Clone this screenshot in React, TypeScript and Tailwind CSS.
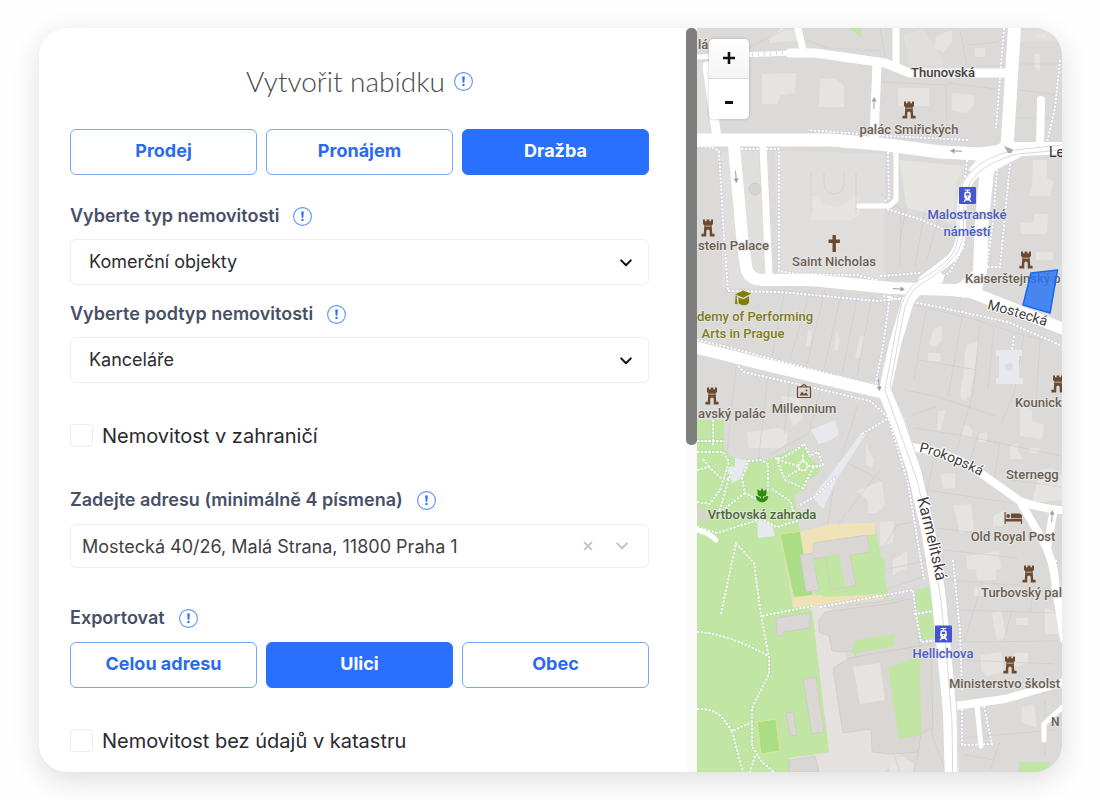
import { useState } from "react";
import type { ReactNode } from "react";

const FORM_FONT = "font-['Inter','Liberation_Sans',sans-serif]";

function InfoButton({ label }: { label: string }) {
  return (
    <button type="button" aria-label={label} className="size-[19px] shrink-0">
      <svg viewBox="0 0 19 19" className="block size-full" aria-hidden="true">
        <circle cx="9.5" cy="9.5" r="8.9" fill="#fff" stroke="#5b92fb" strokeWidth="1.1" />
        <path d="M8.2 4.6h2.6l-.5 6.2H8.7z" fill="#2b6ff5" />
        <circle cx="9.5" cy="12.9" r="1.2" fill="#2b6ff5" />
      </svg>
    </button>
  );
}

function FieldHeading({ children, htmlFor, info }: { children: ReactNode; htmlFor?: string; info: string }) {
  const text = "text-[18px] leading-7 font-semibold text-[#475066]";
  return (
    <div className="flex h-7 items-center gap-[14px]">
      {htmlFor ? (
        <label htmlFor={htmlFor} className={text}>{children}</label>
      ) : (
        <span className={text}>{children}</span>
      )}
      <InfoButton label={info} />
    </div>
  );
}

function Chevron({ className }: { className: string }) {
  return (
    <svg viewBox="0 0 12 8" className={className} fill="none" stroke="currentColor" strokeWidth="2" strokeLinecap="round" strokeLinejoin="round" aria-hidden="true">
      <path d="M1.2 1.4 6 6.2l4.8-4.8" />
    </svg>
  );
}

function Choices({ options, initial, label }: { options: string[]; initial: string; label: string }) {
  const [active, setActive] = useState(initial);
  return (
    <div role="group" aria-label={label} className="grid grid-cols-3 gap-[9px]">
      {options.map((o) => (
        <button
          key={o}
          type="button"
          aria-pressed={o === active}
          onClick={() => setActive(o)}
          className={
            o === active
              ? "h-[46px] rounded-[6px] border border-[#2970ff] bg-[#2970ff] pb-[3px] text-[18px] font-bold text-white"
              : "h-[46px] rounded-[6px] border border-[#7ba5f8] bg-white pb-[3px] text-[18px] font-bold text-[#2b6bea]"
          }
        >
          {o}
        </button>
      ))}
    </div>
  );
}

function SelectBox({ id, options }: { id: string; options: string[] }) {
  return (
    <div className="relative">
      <select id={id} className="h-[46px] w-full appearance-none rounded-[6px] border border-[#eeeef2] bg-white pr-12 pb-[2px] pl-[18px] text-[18px] text-[#2c2c30]">
        {options.map((o) => (
          <option key={o}>{o}</option>
        ))}
      </select>
      <Chevron className="pointer-events-none absolute top-[20px] right-[17px] h-2 w-3 text-[#111]" />
    </div>
  );
}

function CheckRow({ children }: { children: ReactNode }) {
  return (
    <label className="flex h-[23px] items-center gap-[9px] text-[20px] text-[#2a2a2e]">
      <input type="checkbox" className="size-[23px] appearance-none rounded-[4px] border border-[#ececf0] bg-white checked:bg-[#2970ff]" />
      {children}
    </label>
  );
}

function Road({ d, w }: { d: string; w: number }) {
  return <path d={d} fill="none" stroke="#fff" strokeWidth={w} strokeLinecap="round" strokeLinejoin="round" />;
}

function Footpath({ d, tone = "#c5c8dc" }: { d: string; tone?: string }) {
  return (
    <g fill="none" strokeLinejoin="round">
      <path d={d} stroke={tone} strokeWidth="2.8" strokeOpacity="0.6" />
      <path d={d} stroke="#fff" strokeWidth="1.9" strokeDasharray="2.4 1.4" />
    </g>
  );
}

function Castle({ x, y }: { x: number; y: number }) {
  return (
    <path
      transform={`translate(${x - 7} ${y - 9})`}
      d="M2 .5h2v1.8h1.6V.5h2.8v1.8H10V.5h2v4.6l-1.4 1.2.7 8.4H13.600v2.800H8.700v-5.200a1.700 1.700 0 0 0-3.400 0v5.200H.4v-2.800h2.300l.7-8.400L2 5.100zM4.300 6.800v.8h5.400v-.8z"
      fill="#6b4a32"
      fillRule="evenodd"
      stroke="#e6e3df"
      strokeWidth="0.5"
      paintOrder="stroke"
    />
  );
}

function Tram({ x, y }: { x: number; y: number }) {
  return (
    <g transform={`translate(${x} ${y})`}>
      <rect width="17" height="17" rx="1" fill="#4356cf" />
      <path d="M5.800 2.400h5.400v1.100H9.200l-.3 1.200h1.200c.8 0 1.300.5 1.400 1.200l.4 3.600c0 1-.6 1.800-1.300 1.900l2 3.400H11l-.8-1.200H6.800l-.8 1.200H4.400l2-3.400c-.7-.1-1.300-.9-1.300-1.900l.4-3.600c.1-.7.6-1.200 1.400-1.200h1.200l-.3-1.200h-2z" fill="#fff" />
      <path d="M7 6.200h3l.3 2.200H6.700z" fill="#4356cf" />
      <circle cx="8.500" cy="9.900" r="0.700" fill="#4356cf" />
    </g>
  );
}

function Arrow({ x, y, r }: { x: number; y: number; r: number }) {
  return (
    <g transform={`translate(${x} ${y}) rotate(${r})`} stroke="#9a9dae" fill="#9a9dae" strokeWidth="1">
      <path d="M-6 0H4" />
      <path d="M1.500 -2.500 6 0 1.500 2.500z" stroke="none" />
    </g>
  );
}

type LabelProps = { x: number; y: number; children: string; fill?: string; anchor?: "start" | "middle" };

function Label({ x, y, children, fill = "#6b5f55", anchor = "middle" }: LabelProps) {
  return (
    <text x={x} y={y} textAnchor={anchor} fill={fill} stroke="#e9e7e4" strokeWidth="2" strokeOpacity="0.8" strokeLinejoin="round" paintOrder="stroke">
      {children}
    </text>
  );
}

function MapDrawing() {
  return (
    <svg viewBox="697 28 365 744" preserveAspectRatio="xMinYMin slice" className="block h-full w-full font-['Roboto','Liberation_Sans',sans-serif] text-[13px] font-medium" role="img" aria-label="Mapa okolí Mostecké ulice">
      <rect x="697" y="28" width="365" height="744" fill="#dcdad8" />

      {/* squares and courtyards */}
      <g fill="#e5e4e1">
        <path d="M697 62h12l6 76h-18zM740 148h18l9 126h-14l-6-25zM722 152h12l10 110 14 26h-36zM900 162l65 5-8 60-20-8-20-18zM775 150l110 4v140l-108-20zM903 36l20-8 22 36-34 4zM1018 30h44v12h-42z" opacity="0.5" />
        <path d="M899 160l66 6-10 18-2 40-22-10-24-6z" />
        <path d="M762 74l34-1-1 20-15 2-2 9h-16zM820 79l14-1 10 8v21h-25zM768 38l14-10 18 4 2 8-32 3zM811 196h8c5 14 27 14 34 0h4v-2l3 20-8 6h-41zM898 88h31v18h-31zM952 93l22 2v10l-8 8-14-2zM936 36l16-6v12l-8 10-9-3zM975 48h10v9h-10zM1034 54h6v18l-5-4zM1036 34h10v4h-10zM1033 160h14v18l7 4-4 14h-22l4-10z" />
        <path d="M1020 222l14 1v-9h14l-1 20h-26zM1036 252h17v8h-17zM934 328l8-2v14l-7 7-6-2zM928 353h12l1 8h-13zM966 345l12-4-4 36-8 24-5-3zM808 330l4 2-2 14h-4zM836 330l4 10-2 10h-4zM860 336h5l-5 22h-5zM762 440l18-12 8 5-2 10h-20zM747 432l32-4 8 14-6 6h-32zM781 396l18 2 4 20-10 8zM866 382h14l-2 12-10 2z" />
        <path d="M938 411l8-1-5 20h-4zM962 382l10-2-2 17-10-2zM962 427l6-3 5 7-2 6h-9zM979 434l8-2v10h-9zM1020 406l12 3v12l12 4-2 14-22-3zM1010 446l8-3v8l6 8h-14zM1029 448h11l-1 5h-9zM1040 470l12-2 10 8v24l-30 3zM941 474l14-1v15l-12 1zM953 505l18-1 3 26-14 3zM967 556l32-5 2 18-5 1v10h-19l-1-10-9-1zM993 516l12-6 2 12-6 4h-8zM857 491l25-10 3 24-8 8-9 0 0-12zM866 444l8 16-2 8-6-4zM880 522l14-1-1 22-13 3zM893 560l14-9v17l-14 7z" />
        <path d="M981 655l20-3 3 20-17 4-6-6zM1013 653h15v10l-12 4zM1016 618h12v7h-12zM992 613l9-3 6 28-10 3zM1022 707l12-2 3 23-16-6zM880 668l6 28-6 10zM974 588l16-2v10h-16zM1045 608l16 6v20h-16zM888 760l14-4 12 8-2 8h-22z" />
      </g>
      <path d="M810 605l22 4 18 60-10 12 4 52 28-5 1 24 32-4-20 24h-96l-2-14 41-5z" fill="#e5e1de" />

      {/* parcel boundaries */}
      <g fill="none" stroke="#c9c6c3" strokeWidth="0.800" opacity="0.600">
        <path d="M806 40l22 8 52 3M748 48l40-20M811 172v42M856 172v42M824 172v10c0 16 20 16 20 0v-10M881 82l65 3 1 57M946 83l52 6M880 28l7 38M960 30l7 36h38M968 45l30-3M1018 64h44M1016 118h40M1020 90l38 5M881 194l20 15-1 60M925 209l-10 58M906 208l-6 34M940 214l-14 48M786 285l-14 71M810 290l-20 70M825 290l-18 74M842 292l-18 76M858 294l-16 80M872 296l-15 80M962 318l-14 79M926 310l-12 70M914 305l60 14 42 14 46 12M980 325l-7 68-20 70M1024 334l-10 60-12 28M994 328l-6 62M1040 341l-4 60M918 360l60 10M905 390l30 6 60 20M912 415l24-8M736 367l-9 86M768 376l-10 87M790 382l-6 52M820 391l-11 42-39 22M858 404l-23 74-8 50M842 460l39 20M880 470l-42 54M915 428l50 8 97 20M934 458l-14 70M978 435l-12 38M1000 442l-7 44M1012 480l50 7M920 489l92 14M934 528l90 10M944 550l74 8M950 580l100 8M955 610l104 3M960 642l98-1M980 590l-15 50M1012 610l-8 30M1034 588l-4 24M962 660l92 4M960 680l50 5M962 738l93-8M1000 742l-10 28M1045 700v56M965 755l30 5" />
        <path d="M845 606l20-2 40-6M855 665l-12 64M880 655l18-9M932 655v80l14 37M888 738l12 34M920 745l-6 27M885 545l12-20 22-4M885 570l42-10M885 590l40-14M886 614v24" />
      </g>

      {/* parks and gardens */}
      <g fill="#c1e5a3">
        <path d="M697 420H724V448L730 456 742 460 762 462 780 455 790 450 803 446 812 460 820 466 818 474 808 480 804 490 794 495 798 520 800 532 780 534 793 607 812 610 829 752 789 758V772H697z" />
        <path d="M806 530l69-4 14 72-72 6zM914 590l15-3 4 24-17 4zM916 616l16-3 3 24-15 4zM849 28h12v10zM1019 762h32l-6 10h-26zM880 560l4-3 2 14-6 2z" />
      </g>
      <path d="M697 508l10 2 2 12-12-2zM736 458l-4 8" fill="#d3d6c9" />
      <path d="M780 534l24-3 9 64-19 4z" fill="#a9dd86" stroke="#dfe88c" strokeWidth="1" />
      <path d="M757 722l19-3 4 32-19 3z" fill="#a9dd86" stroke="#d7e98c" strokeWidth="1.200" />
      <path d="M800 532l31-8 44-1v11l-54 8-8 8 2 17-9 2zM792 597l28-2 6 2 58-3v5l-91 9z" fill="#f0e2b7" />

      {/* buildings standing in the park */}
      <g fill="#d9d6d4" stroke="#c9c6c3" strokeWidth="0.600">
        <path d="M813 543l54-8 3 17-20 3 6 31-25 3-5-32-13 2 6 31-13 2-6-37 13-2z" />
        <path d="M776 618l34-5v15l-27 4v4h-6zM803 679l13-2 8 55-12 2zM786 713l7-1 4 24-7-1zM789 760l26-4 4 16h-30zM825 612l60-8 30-6 6 58-28 4-38 4 1-14-14 2-10-1-3-15-10-4v-12z" />
        <path d="M833 668l16-10 82-14 2 84-12 6-3 18-28 2-18-2-1-23-28 4z" />
      </g>
      <path d="M826 556l13-2 6 32-14 3z" fill="#c1e5a3" />
      <path d="M853 667l27-4 5 37-25 4z" fill="#e5e4e1" />
      <path d="M856 640l38-6v12l-43 8z" fill="#c1e5a3" />
      <path d="M888 668l32-12 1 79-22 4z" fill="#c1e5a3" />

      {/* paved yards */}
      <g fill="#e8e9ee">
        <path d="M811 430l24-10 4 14-10 7-10 3zM862 432l4 2-28 43-15 32-11-12 22-27zM735 458l14 3-2 10-12-3zM726 467l16-1 2 11-12 6zM757 517l15 6 3 13-17 2zM996 350h26v6h-3v22h4v6h-27v-6h3v-22h-3z" />
      </g>
      <circle cx="1009" cy="367" r="4" fill="#dcdde2" />
      <circle cx="755" cy="189" r="6" fill="#d6d4d2" stroke="#cac8c5" strokeWidth="0.800" />

      {/* footpaths */}
      <Footpath d="M697 146l14 1 8 4 4 70 5 70 52 1 97 9 28-3M741 149h18M766 149h13v122l18 3 60 1 20 5M697 340l18 4 160 42 8-40 7-50M738 366l6 6 66 15 60 14 18 16 20 66 16 96M888 152l1 46-10 8M967 160l-5 46 2 40-14 26-20 12M887 209l35 11 28 12M1004 28l-8 100M998 158l-5 64-7 50M1010 164l-10 103h-14M1060 60l-5 48-8 34M883 296l60 12 65 14 54 24M1014 336l-2 14M880 276l40-3M968 140l-80-4-80-6" />
      <Footpath d="M820 607l60-11 33-6 3 24 5 28 18-2M914 614l20-3M953 560l7 70 2 60M962 705v40l30-1-8-38M862 434l25-15M800 505l14-8 22-20M1056 560l5 80" />
      <g>
        <Footpath tone="#a9d6a0" d="M713 420v25M697 441h27M697 452h26l6 10-9 28-10 14-13-2M697 470l12-3 12 11 8 1M709 467l-6-8M731 472l-12 40 2 5 40 2M748 461l13-1 7 4v25l-8 12-15-8-3-14 6-18M776 458l9 22 18 8 10-20 10-3-5-13-8 4-6-12-8 6-14 8zM798 466l-20-6M800 469l-14 8M803 461v-8M808 466h10M772 489l18 12 7 20-20 6-20-10M745 493l-26 20M697 527l20 6 44-14" />
        <Footpath tone="#a9d6a0" d="M721 614l15-71 18 20 7 52 8 43v16l-17 34v38l10 16 12 10M762 616l50-10M697 632c20 0 50 12 71 24M697 709c20 0 24 6 35 22l20-9M732 731l11 41M755 756l-5 16" />
        <circle cx="803" cy="466" r="4.500" fill="#c1e5a3" stroke="#fff" strokeWidth="1.500" strokeDasharray="2.400 1" />
      </g>
      <path d="M697 530c8 2 14 5 19 10" fill="none" stroke="#fff" strokeWidth="5" strokeLinecap="round" />

      {/* streets */}
      <Road w={5} d="M697 57l93-4" />
      <path d="M752 54.500l36-2" stroke="#d9d9e0" strokeWidth="4" strokeDasharray="1 5" />
      <Road w={9} d="M790 53l25 0 70 10 25 10h95" />
      <Road w={7} d="M797 24l6 26" />
      <Road w={9} d="M877 64l-3 74" />
      <Road w={7} d="M896 24v40" />
      <Road w={13} d="M690 140h140l50 4 60 8 40 2 30-4" />
      <Road w={13} d="M1015 20l-8 128" />
      <Road w={9} d="M707 66l10 72" />
      <Road w={12} d="M734 146l8 90 4 30q2 13 15 14l50 0 80 8 60 2 20 2 90 36" />
      <Road w={7} d="M763 146l6 128" />
      <Road w={14} d="M988 160l-6 60-2 50q-2 18-20 20" />
      <path d="M958 284l18-16 12-2-4 12-2 14-20 6z" fill="#fff" />
      <Road w={9} d="M1070 148l-47 2q-30 8-48 24-12 10-13 30l-1 30q-2 18-12 26l-26 20" />
      <path d="M1002 142l60 0v12l-40 2-26 14-8 10-20-10 14-16z" fill="#fff" />
      <Road w={12} d="M938 278q-25 10-31 26l-12 40-10 46" />
      <Road w={12} d="M690 346l60 15 70 17 60 14" />
      <Road w={14} d="M884 390l14 32 16 48 14 60 10 60 6 60 6 62 2 70" />
      <Road w={8} d="M1041 100l-1 48" />
      <Road w={5} d="M859 206h30l7-6v-48" />
      <Road w={8} d="M910 447q40 4 72 27l38 27q20 8 50 10" />
      <Road w={8} d="M1022 505l20 34q12 20 14 50l8 50" />
      <Road w={8} d="M1053 514l-6 34" />
      <Road w={8} d="M955 706l50-7 62-18" />
      <Road w={5} d="M977 706l4 40" />
      <Road w={5} d="M1066 704l-22 20v16" />

      {/* tram tracks */}
      <g fill="none" stroke="#d5d6de" strokeWidth="0.900">
        <path d="M1062 145l-47 5q-28 6-42 20-13 10-14 34v30q-3 18-10 24-10 12-30 22-15 10-20 34l-14 76 12 34 20 56 14 60 10 60 6 60 5 62 1 70" />
        <path d="M1062 150l-45 4q-28 8-40 20-12 12-13 30l-1 32q-3 16-12 24-12 14-30 24-14 8-18 32l-13 70 14 34 18 52 14 60 10 60 6 60 5 62 1 75" />
      </g>

      <Arrow x={874} y={103} r={-88} />
      <Arrow x={736} y={177} r={86} />
      <Arrow x={956} y={151} r={183} />
      <Arrow x={899} y={289} r={4} />
      <Arrow x={879} y={385} r={84} />
      <Arrow x={1052} y={516} r={-86} />
      <path d="M1004 146l9 3.500-1.500 3.500-3.500 0z" fill="#a9acb8" />

      {/* place names */}
      <Label x={698} y={49} anchor="start">lá</Label>
      <Label x={943} y={77} fill="#454242">Thunovská</Label>
      <Castle x={909} y={110} />
      <Label x={909} y={134}>palác Smiřických</Label>
      <text x="1049" y="157" className="text-[14px] font-normal" fill="#302f30">Le</text>
      <Castle x={708} y={228} />
      <Label x={698} y={250} anchor="start">stein Palace</Label>
      <path d="M832.500 235h3.400v4.600h4v3.300h-4V252h-3.400v-9.100h-4v-3.300h4z" fill="#6b4a32" />
      <Label x={834} y={266}>Saint Nicholas</Label>
      <Tram x={959} y={187} />
      <Label x={967} y={219} fill="#4a5cc4">Malostranské</Label>
      <Label x={967} y={236} fill="#4a5cc4">náměstí</Label>
      <Castle x={1026} y={260} />
      <Label x={965} y={283} anchor="start">Kaiserštejnský p</Label>
      <path d="M1031 273l26.500-3-7.500 43-27-8z" fill="#2673f5" fillOpacity="0.820" stroke="#1768f2" strokeWidth="1.500" strokeLinejoin="round" />

      <g fill="#808000">
        <path d="M735 294.500l8-4 8 3-7.500 4.300z" />
        <path d="M738.500 297.500l5 1.800 5.500-3v5.200c0 2.800-2.500 3.700-5.200 3.700-2.500 0-4-.8-5.300-2.200zM735.600 295.500l1.300.6v4.200l.6 4-2.500-.3z" />
      </g>
      <Label x={697} y={321} anchor="start" fill="#7d7d1c">demy of Performing</Label>
      <Label x={743} y={338} fill="#7d7d1c">Arts in Prague</Label>

      <Castle x={712} y={396} />
      <Label x={698} y={418} anchor="start">avský palác</Label>
      <g fill="none" stroke="#6b4a32" strokeWidth="1.200">
        <path d="M797.500 387h13v10.500h-13zM800.500 387l3.500-2.500 3.500 2.500" />
        <path d="M799.500 395.500l2.500-4 2 2.500 2-1.500 2.500 3z" fill="#6b4a32" stroke="none" />
        <circle cx="806.500" cy="390.500" r="1" fill="#6b4a32" stroke="none" />
      </g>
      <Label x={804} y={413}>Millennium</Label>

      <path d="M757.500 489l2.700 2.200 1.800-3.200 1.800 3.200 2.700-2.200v4.200c0 2-1.600 3.200-3.600 3.500v2.200c1-2 3-3 5.300-3 0 3.800-2.600 6.300-6.200 6.300s-6.200-2.500-6.200-6.300c2.300 0 4.300 1 5.300 3v-2.200c-2-.3-3.600-1.500-3.600-3.500z" fill="#2f8a12" />
      <Label x={762} y={519} fill="#4a6b38">Vrtbovská zahrada</Label>

      <Castle x={1058} y={384} />
      <Label x={1015} y={407} anchor="start">Kounick</Label>
      <Label x={1006} y={479} anchor="start">Sternegg</Label>
      <g fill="#6b4a32">
        <path d="M1004.500 512v12h1.200v-2.500h15.200v2.500h1.200v-5h-16.400v-7z" />
        <path d="M1011 513.500h7.500c2 0 3.500 1.200 3.500 3v1.700h-11z" />
        <circle cx="1008.200" cy="516" r="1.900" />
      </g>
      <Label x={1013} y={541}>Old Royal Post</Label>
      <Castle x={1029} y={574} />
      <Label x={981} y={597} anchor="start">Turbovský pal</Label>
      <Tram x={935} y={625.500} />
      <Label x={943} y={658} fill="#4a5cc4">Hellichova</Label>
      <Castle x={1010} y={665} />
      <Label x={949} y={688} anchor="start">Ministerstvo školst</Label>
      <text x="1051" y="726" className="text-[12px]" fill="#6b5f55">N</text>

      {/* street names following their streets */}
      <defs>
        <path id="mostecka" d="M987 309q32 8 70 21" />
        <path id="prokopska" d="M919 452q30 6 76 32" />
        <path id="karmelitska" d="M917 499q10 36 23 100" />
      </defs>
      <g fill="#3f3d3d" stroke="#fff" strokeWidth="2" strokeLinejoin="round" paintOrder="stroke" className="text-[14px] font-normal">
        <text><textPath href="#mostecka">Mostecká</textPath></text>
        <text><textPath href="#prokopska">Prokopská</textPath></text>
        <text className="text-[16px]"><textPath href="#karmelitska">Karmelitská</textPath></text>
      </g>
    </svg>
  );
}

export default function App() {
  const [address, setAddress] = useState("Mostecká 40/26, Malá Strana, 11800 Praha 1");
  return (
    <main className={`min-h-screen bg-[#fefefe] py-7 pr-[38px] pl-[39px] ${FORM_FONT}`}>
      <div className="grid grid-cols-[647fr_11px_365fr] overflow-hidden rounded-[28px] bg-white shadow-[0_8px_28px_rgba(0,0,0,0.13)]">
        <form className="pt-[33px] pr-[37px] pb-5 pl-[31px]" onSubmit={(e) => e.preventDefault()}>
          <div className="mb-7 flex h-10 items-center justify-center gap-[9px]">
            <h1 className="font-['Lato','Liberation_Sans',sans-serif] text-[28px] leading-10 font-light text-[#4a4a4a]">Vytvořit nabídku</h1>
            <InfoButton label="Nápověda k nabídce" />
          </div>
          <Choices label="Typ nabídky" options={["Prodej", "Pronájem", "Dražba"]} initial="Dražba" />

          <div className="mt-[27px] flex flex-col gap-[9px]">
            <FieldHeading htmlFor="typ" info="Nápověda k typu">Vyberte typ nemovitosti</FieldHeading>
            <SelectBox id="typ" options={["Komerční objekty", "Byty", "Domy"]} />
          </div>
          <div className="mt-[15px] flex flex-col gap-[9px]">
            <FieldHeading htmlFor="podtyp" info="Nápověda k podtypu">Vyberte podtyp nemovitosti</FieldHeading>
            <SelectBox id="podtyp" options={["Kanceláře", "Sklady", "Obchodní prostory"]} />
          </div>

          <div className="mt-[41px]">
            <CheckRow>Nemovitost v zahraničí</CheckRow>
          </div>

          <div className="mt-[39px] flex flex-col gap-[10px]">
            <FieldHeading htmlFor="adresa" info="Nápověda k adrese">Zadejte adresu (minimálně 4 písmena)</FieldHeading>
            <div className="flex h-11 items-center rounded-[6px] border border-[#eeeef2] bg-white pr-[20px] pl-[11px] text-[#c4c4c8]">
              <input id="adresa" value={address} onChange={(e) => setAddress(e.target.value)} className="min-w-0 flex-1 bg-transparent text-[18px] text-[#414145] outline-none" />
              <button type="button" aria-label="Smazat adresu" onClick={() => setAddress("")} className="mr-[23px] size-[10px]">
                <svg viewBox="0 0 11 11" className="block size-full" fill="none" stroke="currentColor" strokeWidth="2.200" aria-hidden="true">
                  <path d="M1.200 1.200l8.600 8.600M9.800 1.200 1.200 9.800" />
                </svg>
              </button>
              <button type="button" aria-label="Zobrazit návrhy" className="h-2 w-3">
                <Chevron className="block h-2 w-3" />
              </button>
            </div>
          </div>

          <div className="mt-9 flex flex-col gap-[10px]">
            <FieldHeading info="Nápověda k exportu">Exportovat</FieldHeading>
            <Choices label="Exportovat" options={["Celou adresu", "Ulici", "Obec"]} initial="Ulici" />
          </div>

          <div className="mt-[41px]">
            <CheckRow>Nemovitost bez údajů v katastru</CheckRow>
          </div>
        </form>

        <div className="bg-[#fafafa]" aria-hidden="true">
          <div className="h-[56%] rounded-[5px] bg-[#7f7f7f]" />
        </div>

        <section className="relative overflow-hidden bg-[#dddbd9]" aria-label="Mapa">
          <MapDrawing />
          <div className="absolute top-[11px] left-3 flex w-10 flex-col overflow-hidden rounded-[5px] bg-white shadow-[0_0_3px_rgba(0,0,0,0.25)]">
            <button type="button" aria-label="Přiblížit" className="flex h-10 items-center justify-center border-b border-[#dcdcdc] bg-linear-to-b from-white to-[#f4f4f4] pb-[2px]">
              <svg viewBox="0 0 12 12" className="size-3" aria-hidden="true"><path d="M4.700 0h2.600v4.700H12v2.600H7.300V12H4.700V7.300H0V4.700h4.700z" fill="#111" /></svg>
            </button>
            <button type="button" aria-label="Oddálit" className="flex h-10 items-center justify-center bg-white pt-[6px]">
              <svg viewBox="0 0 8 3" className="h-[3px] w-2" aria-hidden="true"><path d="M0 0h8v3H0z" fill="#111" /></svg>
            </button>
          </div>
        </section>
      </div>
    </main>
  );
}
